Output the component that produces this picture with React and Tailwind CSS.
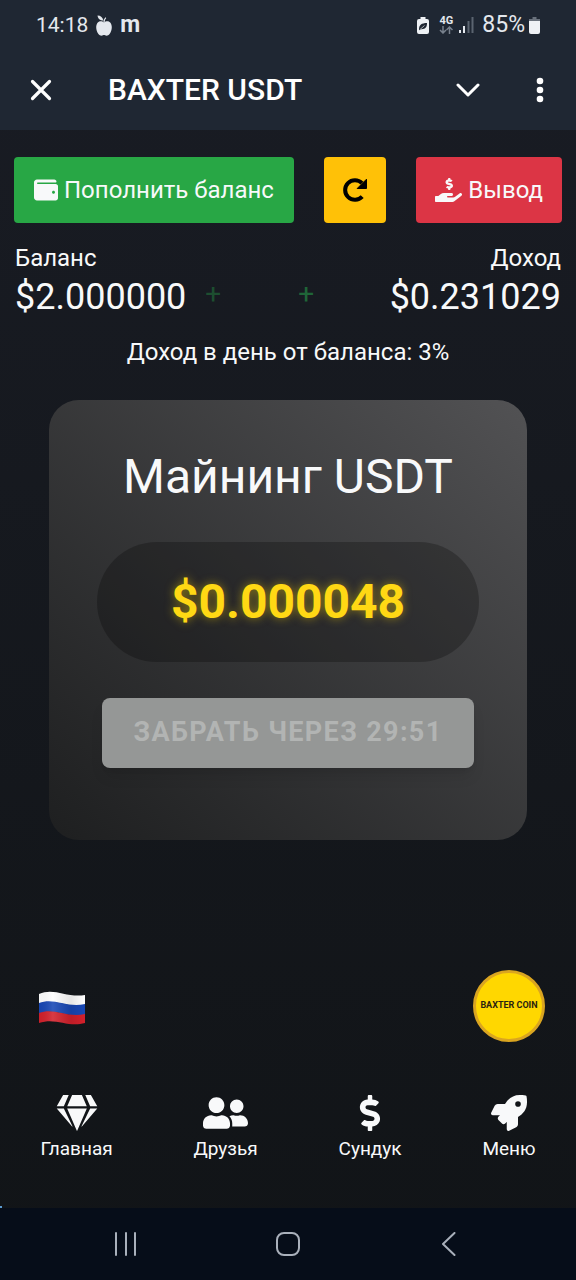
import { useState } from 'react';
import {
  FaWallet,
  FaHandHoldingUsd,
  FaGem,
  FaUserFriends,
  FaDollarSign,
  FaRocket,
} from 'react-icons/fa';

const NAV = [
  { key: 'home', label: 'Главная', Icon: FaGem, size: 'w-[42px] h-9' },
  { key: 'friends', label: 'Друзья', Icon: FaUserFriends, size: 'w-[45px] h-9' },
  { key: 'chest', label: 'Сундук', Icon: FaDollarSign, size: 'w-9 h-9' },
  { key: 'menu', label: 'Меню', Icon: FaRocket, size: 'w-9 h-9' },
];

function StatusBar() {
  return (
    <div className="flex items-center justify-between h-[50px] px-9 text-[#e4e8ee]">
      <div className="flex items-center gap-2">
        <span className="text-[21px] leading-6">14:18</span>
        <svg viewBox="0 0 16 21" className="w-4 h-[21px]" fill="currentColor" aria-hidden="true">
          <path d="M8 7.400C6.400 6 3.600 5.600 1.800 7.400-.6 10-.2 15.600 2.400 19c1.400 1.800 3.200 2 4.600 1.200.6-.3 1.400-.3 2 0 1.400.8 3.200.6 4.600-1.200 2.600-3.400 3-9 .6-11.600C12.400 5.600 9.600 6 8 7.400z" />
          <path d="M7.300 5.600C4 5.600 1.800 3.400 1.500.4c3.200 0 5.400 2 5.800 5.200z" />
          <path d="M8 7.400C8 5.200 8.600 3.800 9.800 2.600" fill="none" stroke="currentColor" strokeWidth="1.200" />
        </svg>
        <span className="text-[23px] leading-6 font-bold">m</span>
      </div>
      <div className="flex items-center">
        <svg viewBox="0 0 12 17" className="w-3 h-[17px] mr-2.5" aria-hidden="true">
          <path d="M3.500 0h5v2h1.500a2 2 0 0 1 2 2v11a2 2 0 0 1-2 2H2a2 2 0 0 1-2-2V4a2 2 0 0 1 2-2h1.500z" fill="#eef1f5" />
          <path d="M2 12.500C2 8 4.500 6 10 6c.2 4-1.800 6.500-6 6.200l-1.200 1z" fill="#1f2733" />
          <path d="M3 12.500 7.500 8.500" stroke="#eef1f5" strokeWidth=".7" />
        </svg>
        <div className="flex flex-col items-center mr-1.5">
          <span className="text-[11px] leading-[10px] font-bold">4G</span>
          <svg viewBox="0 0 14 8" className="w-3.5 h-2" fill="none" stroke="#78818d" strokeWidth="1.500" aria-hidden="true">
            <path d="M4 0v7M1 4l3 3 3-3M10.500 8V1M7.500 4l3-3 3 3" />
          </svg>
        </div>
        <svg viewBox="0 0 15 16" className="w-[15px] h-4 mr-2" aria-hidden="true">
          <path d="M1 13v3M5 9v7" stroke="#e4e8ee" strokeWidth="2" />
          <path d="M9.500 4v12M13.500 0v16" stroke="#5b6470" strokeWidth="2" />
        </svg>
        <span className="text-[23px] leading-6 mr-1">85%</span>
        <svg viewBox="0 0 11 17" className="w-[11px] h-[17px]" aria-hidden="true">
          <path d="M3.500 0h4v2H11v3H0V2h3.500z" fill="#69717c" />
          <path d="M0 4h11v11a2 2 0 0 1-2 2H2a2 2 0 0 1-2-2z" fill="#eef1f5" />
        </svg>
      </div>
    </div>
  );
}

function TitleBar() {
  return (
    <div className="flex items-center h-20 pl-[30px] pr-8 text-white">
      <button aria-label="Закрыть">
        <svg viewBox="0 0 22 22" className="w-[22px] h-[22px]" fill="none" stroke="currentColor" strokeWidth="3.200" strokeLinecap="round">
          <path d="M2.500 2.500l17 17M19.500 2.500l-17 17" />
        </svg>
      </button>
      <h1 className="flex-1 ml-14 text-[30px] leading-9 font-medium">BAXTER USDT</h1>
      <button aria-label="Свернуть">
        <svg viewBox="0 0 24 14" className="w-6 h-3.5" fill="none" stroke="currentColor" strokeWidth="3" strokeLinecap="round" strokeLinejoin="round">
          <path d="M2 2l10 10L22 2" />
        </svg>
      </button>
      <button aria-label="Ещё" className="ml-14">
        <svg viewBox="0 0 8 26" className="w-2 h-[26px]" fill="currentColor">
          <circle cx="4" cy="4" r="3.300" />
          <circle cx="4" cy="13" r="3.300" />
          <circle cx="4" cy="22" r="3.300" />
        </svg>
      </button>
    </div>
  );
}

function RefreshIcon() {
  return (
    <svg viewBox="0 0 24 24" className="w-6 h-6" aria-hidden="true">
      <path d="M19.200 18.600A9.800 9.800 0 1 1 19 5.200" fill="none" stroke="currentColor" strokeWidth="4" />
      <path d="M23.500 1.200v9.300h-9.300z" fill="currentColor" stroke="currentColor" strokeWidth="1" strokeLinejoin="round" />
    </svg>
  );
}

function RussianFlag() {
  return (
    <svg viewBox="0 0 48 36" className="w-12 h-9" aria-hidden="true">
      <defs>
        <linearGradient id="flagShade" x1="0" x2="1" y1="0" y2="0">
          <stop offset="0" stopColor="#000" stopOpacity=".04" />
          <stop offset=".3" stopColor="#fff" stopOpacity=".12" />
          <stop offset=".7" stopColor="#000" stopOpacity=".1" />
          <stop offset="1" stopColor="#000" stopOpacity="0" />
        </linearGradient>
      </defs>
      <path d="M1 4C16-3 28 8 47 5v10C28 18 16 8 1 14z" fill="#fff" />
      <path d="M1 13C16 7 28 18 47 14v11C28 28 16 17 1 24z" fill="#1747b5" />
      <path d="M1 23C16 17 28 28 47 24v9C30 38 18 27 1 33z" fill="#d3202b" />
      <path d="M1 4C16-3 28 8 47 5v28C30 38 18 27 1 33z" fill="url(#flagShade)" />
    </svg>
  );
}

function MiningCard() {
  return (
    <section className="mx-[49px] mt-8 pt-[49px] pb-18 px-12 rounded-[30px] bg-linear-to-tr from-[#1e1f20] to-[#525254] flex flex-col items-center">
      <h2 className="text-5xl leading-14 text-[#f8f9fa]">Майнинг USDT</h2>
      <div className="self-stretch mt-[37px] py-8 rounded-full bg-black/25 text-center">
        <span className="text-5xl leading-14 font-bold text-[#ffd814] [text-shadow:0_0_10px_rgba(255,215,0,0.5)]">
          $0.000048
        </span>
      </div>
      <button
        disabled
        className="self-stretch mx-[5px] mt-9 h-[70px] pb-0.5 rounded-lg bg-[#959796] text-[#b2b4b3] text-[27px] font-bold uppercase tracking-wider shadow-lg"
      >
        Забрать через 29:51
      </button>
    </section>
  );
}

export default function App() {
  const [active, setActive] = useState('home');

  return (
    <div className="min-h-screen flex flex-col font-['Roboto','Noto_Sans',sans-serif] bg-linear-to-b from-[#191c24] to-[#111417] text-[#f8f9fa]">
      <header className="bg-[#1f2733]">
        <StatusBar />
        <TitleBar />
      </header>

      <main className="flex-1 flex flex-col">
        <div className="flex justify-between px-3.5 pt-[27px] text-2xl">
          <button className="flex items-center gap-1.5 h-[66px] px-5 rounded-sm bg-[#28a745]">
            <FaWallet className="w-6 h-6" />
            Пополнить баланс
          </button>
          <button aria-label="Обновить" className="h-[66px] px-[19px] rounded-sm bg-[#ffc107] text-black">
            <RefreshIcon />
          </button>
          <button className="flex items-center gap-1.5 h-[66px] px-[19px] rounded-sm bg-[#dc3545]">
            <FaHandHoldingUsd className="w-[27px] h-6" />
            Вывод
          </button>
        </div>

        <div className="flex px-[15px] mt-[17px]">
          <div>
            <div className="text-2xl leading-9">Баланс</div>
            <div className="text-4xl leading-[42px]">$2.000000</div>
          </div>
          <div className="flex items-end gap-[77px] ml-[19px] pb-1.5 text-[28px] leading-9">
            <span className="text-[#1d4e30]">+</span>
            <span className="text-[#1f6538]">+</span>
          </div>
          <div className="ml-auto text-right">
            <div className="text-2xl leading-9">Доход</div>
            <div className="text-4xl leading-[42px]">$0.231029</div>
          </div>
        </div>

        <p className="mt-[18px] text-center text-2xl leading-8">Доход в день от баланса: 3%</p>

        <MiningCard />

        <div className="mt-auto flex items-center justify-between pl-[38px] pr-[31px]">
          <button aria-label="Язык" className="pt-1">
            <RussianFlag />
          </button>
          <button className="w-[72px] h-[72px] rounded-full border-3 border-[#daa520] bg-[#ffd700] text-[9px] font-bold text-[#2b2410] whitespace-nowrap flex items-center justify-center">
            BAXTER COIN
          </button>
        </div>

        <nav className="flex justify-around mt-[53px] pb-[45px]">
          {NAV.map(({ key, label, Icon, size }) => (
            <button key={key} onClick={() => setActive(key)} aria-pressed={active === key} className="flex flex-col items-center">
              <Icon className={size} />
              <span className="mt-1 text-[19px] leading-7">{label}</span>
            </button>
          ))}
        </nav>
        <div className="w-0.5 h-0.5 -mt-0.5 bg-[#5b9bd0]" />
      </main>

      <footer className="flex items-center justify-between h-[72px] px-[113px] bg-[#060d19] text-[#a9b0bb]">
        <button aria-label="Недавние">
          <svg viewBox="0 0 26 24" className="w-[26px] h-6" stroke="currentColor" strokeWidth="2" strokeLinecap="round">
            <path d="M3 1v22M13 1v22M22 1v22" />
          </svg>
        </button>
        <button aria-label="Домой">
          <svg viewBox="0 0 24 24" className="w-6 h-6" fill="none" stroke="currentColor" strokeWidth="2">
            <rect x="1" y="1" width="22" height="22" rx="7" />
          </svg>
        </button>
        <button aria-label="Назад">
          <svg viewBox="0 0 26 24" className="w-[26px] h-6" fill="none" stroke="currentColor" strokeWidth="2" strokeLinecap="round" strokeLinejoin="round">
            <path d="M17.500 1L6 12l11.500 11" />
          </svg>
        </button>
      </footer>
    </div>
  );
}
